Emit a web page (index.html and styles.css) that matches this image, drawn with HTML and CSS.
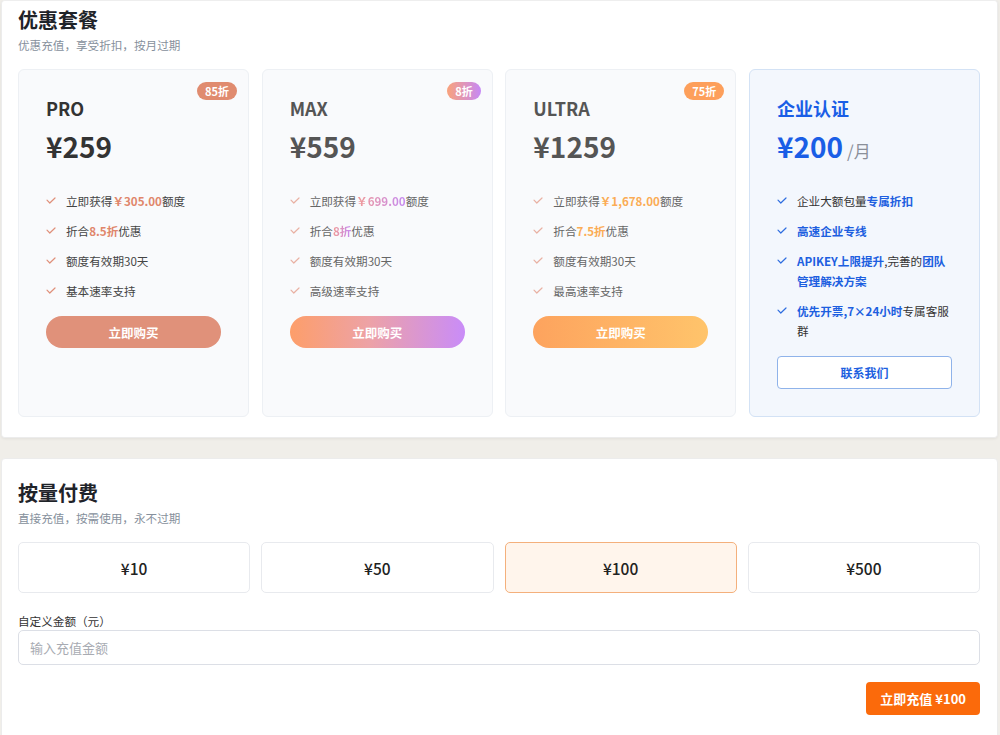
FILE: index.html
```html
<!DOCTYPE html>
<html lang="zh-CN">
<head>
<meta charset="utf-8">
<title>优惠套餐</title>
<link rel="stylesheet" href="styles.css">
</head>
<body>
<div class="page">
  <section class="panel panel-plans">
    <h2 class="section-title">优惠套餐</h2>
    <p class="section-sub">优惠充值，享受折扣，按月过期</p>
    <div class="plans">
      <div class="plan plan-pro">
        <span class="badge">85折</span>
        <div class="plan-name">PRO</div>
        <div class="plan-price">¥259</div>
        <ul class="features">
          <li><svg class="check" viewBox="0 0 10 7"><path d="M1 3.2 3.8 6 9 1"/></svg><span>立即获得<em>￥305.00</em>额度</span></li>
          <li><svg class="check" viewBox="0 0 10 7"><path d="M1 3.2 3.8 6 9 1"/></svg><span>折合<em>8.5折</em>优惠</span></li>
          <li><svg class="check" viewBox="0 0 10 7"><path d="M1 3.2 3.8 6 9 1"/></svg><span>额度有效期30天</span></li>
          <li><svg class="check" viewBox="0 0 10 7"><path d="M1 3.2 3.8 6 9 1"/></svg><span>基本速率支持</span></li>
        </ul>
        <button class="buy">立即购买</button>
      </div>
      <div class="plan plan-max">
        <span class="badge">8折</span>
        <div class="plan-name">MAX</div>
        <div class="plan-price">¥559</div>
        <ul class="features">
          <li><svg class="check" viewBox="0 0 10 7"><path d="M1 3.2 3.8 6 9 1"/></svg><span>立即获得<em>￥699.00</em>额度</span></li>
          <li><svg class="check" viewBox="0 0 10 7"><path d="M1 3.2 3.8 6 9 1"/></svg><span>折合<em>8折</em>优惠</span></li>
          <li><svg class="check" viewBox="0 0 10 7"><path d="M1 3.2 3.8 6 9 1"/></svg><span>额度有效期30天</span></li>
          <li><svg class="check" viewBox="0 0 10 7"><path d="M1 3.2 3.8 6 9 1"/></svg><span>高级速率支持</span></li>
        </ul>
        <button class="buy">立即购买</button>
      </div>
      <div class="plan plan-ultra">
        <span class="badge">75折</span>
        <div class="plan-name">ULTRA</div>
        <div class="plan-price">¥1259</div>
        <ul class="features">
          <li><svg class="check" viewBox="0 0 10 7"><path d="M1 3.2 3.8 6 9 1"/></svg><span>立即获得<em>￥1,678.00</em>额度</span></li>
          <li><svg class="check" viewBox="0 0 10 7"><path d="M1 3.2 3.8 6 9 1"/></svg><span>折合<em>7.5折</em>优惠</span></li>
          <li><svg class="check" viewBox="0 0 10 7"><path d="M1 3.2 3.8 6 9 1"/></svg><span>额度有效期30天</span></li>
          <li><svg class="check" viewBox="0 0 10 7"><path d="M1 3.2 3.8 6 9 1"/></svg><span>最高速率支持</span></li>
        </ul>
        <button class="buy">立即购买</button>
      </div>
      <div class="plan plan-ent">
        <div class="plan-name">企业认证</div>
        <div class="plan-price">¥200<span class="per">/月</span></div>
        <ul class="features">
          <li><svg class="check" viewBox="0 0 10 7"><path d="M1 3.2 3.8 6 9 1"/></svg><span>企业大额包量<em>专属折扣</em></span></li>
          <li><svg class="check" viewBox="0 0 10 7"><path d="M1 3.2 3.8 6 9 1"/></svg><span><em>高速企业专线</em></span></li>
          <li><svg class="check" viewBox="0 0 10 7"><path d="M1 3.2 3.8 6 9 1"/></svg><span><em>APIKEY上限提升</em>,完善的<em>团队管理解决方案</em></span></li>
          <li><svg class="check" viewBox="0 0 10 7"><path d="M1 3.2 3.8 6 9 1"/></svg><span><em>优先开票,7×24小时</em>专属客服群</span></li>
        </ul>
        <button class="contact">联系我们</button>
      </div>
    </div>
  </section>

  <section class="panel panel-pay">
    <h2 class="section-title">按量付费</h2>
    <p class="section-sub">直接充值，按需使用，永不过期</p>
    <div class="amounts">
      <div class="amount">¥10</div>
      <div class="amount">¥50</div>
      <div class="amount amount-active">¥100</div>
      <div class="amount">¥500</div>
    </div>
    <label class="custom-label" for="custom">自定义金额（元）</label>
    <input class="custom-input" id="custom" type="text" placeholder="输入充值金额">
    <div class="actions">
      <button class="recharge">立即充值 ¥100</button>
    </div>
  </section>
</div>
</body>
</html>
```

FILE: styles.css
```css
* { box-sizing: border-box; }

html, body {
  margin: 0;
  padding: 0;
}

body {
  background: #f0eee9;
  font-family: "Noto Sans CJK SC", "Noto Sans", sans-serif;
  color: #333;
}

.page {
  padding: 0 2px 0 1px;
  display: flex;
  flex-direction: column;
  gap: 20px;
}

.panel {
  background: #fff;
  border: 1px solid #ececec;
  border-radius: 4px;
  padding: 5px 17px 20px 16px;
}

.panel-plans {
  border-top-color: #eeeeee;
  box-shadow: 0 1px 3px rgba(0, 0, 0, 0.06);
}

.panel-pay {
  padding-top: 20px;
  padding-bottom: 40px;
}

.section-title {
  margin: 0;
  font-size: 20px;
  line-height: 28px;
  font-weight: 700;
  color: #1f2329;
}

.section-sub {
  margin: 2px 0 0;
  font-size: 11.6px;
  line-height: 18px;
  color: #86909c;
}

.plans {
  margin-top: 15px;
  display: grid;
  grid-template-columns: repeat(4, 1fr);
  gap: 12.7px;
}

.plan {
  position: relative;
  background: #f9fafc;
  border: 1px solid #edf0f4;
  border-radius: 6px;
  padding: 25.5px 27px 27px;
  display: flex;
  flex-direction: column;
}

.badge {
  position: absolute;
  top: 12px;
  right: 11px;
  height: 18px;
  line-height: 18px;
  padding: 0 8px;
  border-radius: 9px;
  color: #fff;
  font-size: 11px;
  font-weight: 700;
}

.plan-name {
  font-size: 18px;
  line-height: 24px;
  font-weight: 600;
  color: #555;
}

.plan-price {
  margin-top: 8.5px;
  font-size: 28px;
  line-height: 36px;
  height: 36px;
  font-weight: 700;
  color: #555;
}

.features {
  list-style: none;
  margin: 22px 0 0;
  padding: 0;
}

.features li {
  display: flex;
  align-items: flex-start;
  padding: 5px 0;
  font-size: 11.6px;
  line-height: 20px;
  color: #666;
}

.features em {
  font-style: normal;
  font-weight: 700;
}

.check {
  flex: none;
  width: 10px;
  height: 7px;
  margin: 6px 10px 0 0;
  fill: none;
  stroke: #e9b1a3;
  stroke-width: 1.2;
  stroke-linecap: round;
  stroke-linejoin: round;
}

.buy {
  margin-top: 10px;
  height: 32px;
  border: none;
  border-radius: 16px;
  color: #fff;
  font-family: inherit;
  font-size: 12.5px;
  font-weight: 700;
  cursor: pointer;
}

/* PRO */
.plan-pro .badge { background: #e08b6f; }
.plan-pro .plan-name,
.plan-pro .plan-price { color: #333; }
.plan-pro .features li { color: #444; }
.plan-pro .features em { color: #e0866b; }
.plan-pro .check { stroke: #e0907a; }
.plan-pro .buy { background: #e0917a; }

/* MAX */
.plan-max .badge { background: linear-gradient(90deg, #f9a27b, #c689f6); }
.plan-max .features em {
  background: linear-gradient(90deg, #f19a95, #c58af3);
  -webkit-background-clip: text;
  background-clip: text;
  color: transparent;
}
.plan-max .buy { background: linear-gradient(90deg, #fd9e6a, #eda2a6 45%, #c98cf8); }

/* ULTRA */
.plan-ultra .badge { background: #fd9f5b; }
.plan-ultra .features em { color: #fbac55; }
.plan-ultra .buy { background: linear-gradient(90deg, #fda35e, #ffc46b); }

/* Enterprise */
.plan-ent {
  background: #f3f7fd;
  border-color: #d3e2f5;
}
.plan-ent .plan-name { color: #1a5ee6; font-weight: 700; }
.plan-ent .plan-price { color: #1a5ee6; }
.plan-ent .per {
  margin-left: 4px;
  font-size: 17px;
  line-height: 1;
  font-weight: 400;
  color: #8a8f99;
}
.plan-ent .features li { color: #333; }
.plan-ent .features em { color: #1d5fe0; }
.plan-ent .check { stroke: #2f6ee0; }

.contact {
  margin-top: 10px;
  height: 33px;
  background: #fff;
  border: 1.5px solid #8fb3ea;
  border-radius: 4px;
  color: #1d5fe0;
  font-family: inherit;
  font-size: 12px;
  font-weight: 700;
  cursor: pointer;
}

/* Pay as you go */
.amounts {
  margin-top: 15px;
  display: grid;
  grid-template-columns: repeat(4, 1fr);
  gap: 11px;
}

.amount {
  height: 51px;
  display: flex;
  align-items: center;
  justify-content: center;
  background: #fff;
  border: 1px solid #e8eaee;
  border-radius: 5px;
  font-size: 15.5px;
  font-weight: 500;
  color: #222;
}

.amount-active {
  background: #fff5ec;
  border-color: #f4b07c;
}

.custom-label {
  display: block;
  margin-top: 19px;
  font-size: 11.6px;
  line-height: 18px;
  color: #333;
}

.custom-input {
  display: block;
  width: 100%;
  height: 35px;
  padding: 0 11px;
  border: 1px solid #dcdfe6;
  border-radius: 5px;
  font-family: inherit;
  font-size: 13px;
  color: #333;
  background: #fff;
}

.custom-input::placeholder { color: #a8abb2; }

.actions {
  margin-top: 17px;
  display: flex;
  justify-content: flex-end;
}

.recharge {
  height: 33px;
  padding: 0 14px;
  background: #fb6a0b;
  border: none;
  border-radius: 4px;
  color: #fff;
  font-family: inherit;
  font-size: 13px;
  font-weight: 700;
  cursor: pointer;
}
```
